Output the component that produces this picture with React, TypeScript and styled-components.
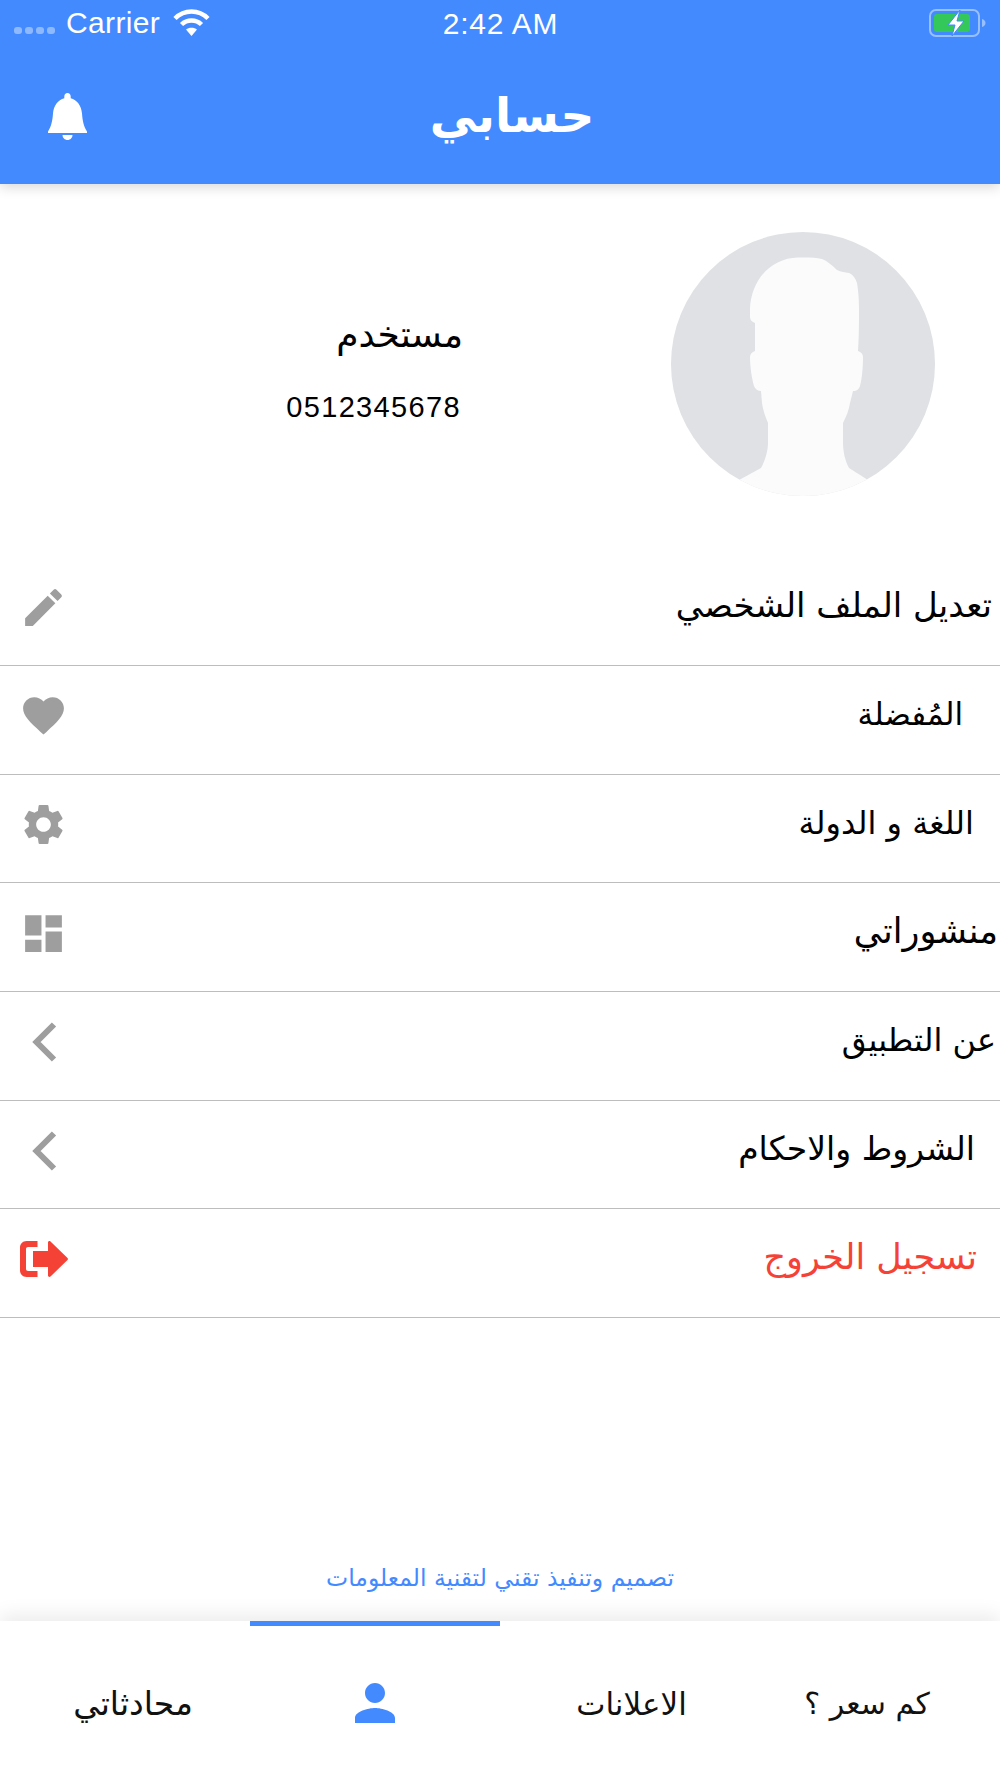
import React from "react";
import styled, { createGlobalStyle } from "styled-components";
import { MdEdit, MdFavorite, MdSettings, MdDashboard, MdPerson } from "react-icons/md";

const Global = createGlobalStyle`
  html, body { margin: 0; padding: 0; background: #fff; }
  body { font-family: "DejaVu Sans", "Liberation Sans", sans-serif; }
`;

const Page = styled.div`
  width: 1000px;
  height: 1778px;
  display: flex;
  flex-direction: column;
  background: #fff;
  overflow: hidden;
`;

const Header = styled.header`
  height: 184px;
  background: #448aff;
  box-shadow: 0 3px 12px rgba(0, 0, 0, 0.16);
  color: #fff;
  display: flex;
  flex-direction: column;
  flex: none;
`;

const StatusBar = styled.div`
  height: 46px;
  padding: 0 13px 0 14px;
  display: grid;
  grid-template-columns: 1fr auto 1fr;
  align-items: center;
  font-family: "Liberation Sans", sans-serif;
  font-size: 30px;
`;

const StatusLeft = styled.div`
  display: flex;
  align-items: center;
`;

const SignalDots = styled.div`
  display: flex;
  gap: 3px;
  margin: 14px 11px 0 0;
`;

const Dot = styled.span`
  width: 8px;
  height: 7px;
  border-radius: 3px;
  background: rgba(255, 255, 255, 0.4);
`;

const Carrier = styled.span`
  letter-spacing: 0.35px;
  margin-right: 13px;
`;

const Clock = styled.span`
  letter-spacing: 0.8px;
  padding-top: 2px;
`;

const StatusRight = styled.div`
  display: flex;
  justify-content: flex-end;
`;

const TitleBar = styled.div`
  flex: 1;
  display: grid;
  grid-template-columns: 135px 1fr 111px;
  align-items: center;
  padding-top: 2px;
`;

const BellWrap = styled.div`
  display: flex;
  justify-content: center;
`;

const Title = styled.h1`
  margin: 0;
  text-align: center;
  font-size: 47px;
  font-weight: 700;
  line-height: 60px;
`;

const Profile = styled.section`
  flex: none;
  margin-top: 48px;
  height: 325.5px;
  display: flex;
  align-items: flex-start;
`;

const Info = styled.div`
  width: 463px;
  height: 264px;
  display: flex;
  flex-direction: column;
  align-items: flex-end;
  justify-content: center;
  flex: none;
`;

const Name = styled.div`
  font-size: 36px;
  line-height: 60px;
  color: #000;
  margin-bottom: 25px;
`;

const Phone = styled.div`
  font-family: "Liberation Sans", sans-serif;
  font-size: 29px;
  letter-spacing: 1.35px;
  line-height: 34px;
  color: #000;
  padding-right: 2px;
`;

const AvatarWrap = styled.div`
  margin-left: 208px;
  width: 264px;
  height: 264px;
  flex: none;
`;

const Menu = styled.nav`
  flex: none;
  display: flex;
  flex-direction: column;
`;

const Row = styled.div`
  height: 108.67px;
  box-sizing: border-box;
  border-bottom: 1px solid #bdbdbd;
  padding-bottom: 8px;
  display: flex;
  align-items: center;
  justify-content: space-between;
`;

const IconSlot = styled.div<{ $color?: string }>`
  width: 87px;
  display: flex;
  justify-content: center;
  align-items: center;
  color: ${(p) => p.$color || "#9e9e9e"};
  flex: none;
`;

const RowLabel = styled.div<{ $inset: number; $size: number; $color?: string }>`
  padding-right: ${(p) => p.$inset}px;
  padding-bottom: 4px;
  font-size: ${(p) => p.$size}px;
  line-height: 50px;
  color: ${(p) => p.$color || "#000"};
`;

const Credit = styled.div`
  margin-top: auto;
  text-align: center;
  font-size: 23.5px;
  line-height: 34px;
  color: #448aff;
  padding-bottom: 26px;
`;

const TabBar = styled.div`
  flex: none;
  height: 157px;
  display: grid;
  grid-template-columns: repeat(4, 1fr);
  background: #fff;
  box-shadow: 0 -6px 18px rgba(0, 0, 0, 0.08);
`;

const Tab = styled.div<{ $active?: boolean }>`
  border-top: 5px solid ${(p) => (p.$active ? "#448aff" : "transparent")};
  display: flex;
  align-items: center;
  justify-content: center;
  color: #448aff;
`;

const TabLabel = styled.span<{ $size: number; $shift: number }>`
  font-size: ${(p) => p.$size}px;
  margin-left: ${(p) => p.$shift}px;
  color: #111;
  padding-top: 3px;
`;

const TabIcon = styled.span`
  display: flex;
  margin-top: 2px;
`;

const Bell = () => (
  <svg width="39" height="47" viewBox="0 0 39 47" fill="#fff">
    <path d="M19.5 0c-1.900 0-3.200 1.500-3.200 3.400v1.800C10 7 5.600 12.600 5 20.500 4.400 28 3.400 33.200 0 38.500V40h39v-1.500c-3.400-5.300-4.400-10.500-5-18C33.400 12.600 29 7 22.700 5.200V3.400C22.700 1.500 21.400 0 19.500 0z" />
    <path d="M14.500 42h10c0 2.800-2.200 5-5 5s-5-2.200-5-5z" />
  </svg>
);

const Wifi = () => (
  <svg width="37" height="28" viewBox="0 0 37 28" fill="none" stroke="#fff" strokeWidth="4.500">
    <path d="M2 9.500C6.500 5 12 2.500 18.500 2.500S30.500 5 35 9.500" />
    <path d="M8.500 15.500c2.700-2.600 6-4 10-4s7.300 1.400 10 4" />
    <path d="M18.500 27l-5.500-6.500c1.500-1.200 3.300-1.800 5.500-1.800s4 .6 5.500 1.800z" fill="#fff" stroke="none" />
  </svg>
);

const Battery = () => (
  <svg width="58" height="28" viewBox="0 0 58 28">
    <rect x="1" y="1" width="49" height="26" rx="6" fill="none" stroke="rgba(255,255,255,0.45)" strokeWidth="2" />
    <path d="M53 10c2 .5 3.500 2 3.500 4s-1.500 3.500-3.500 4z" fill="rgba(255,255,255,0.45)" />
    <rect x="5" y="5" width="36" height="18" rx="3" fill="#34c759" />
    <path d="M31 1L19 16h7l-3 11 12-15h-7z" fill="#fff" stroke="#448aff" strokeWidth="1" />
  </svg>
);

const Avatar = () => (
  <svg width="264" height="264" viewBox="0 0 264 264">
    <defs>
      <clipPath id="avatar-clip">
        <circle cx="132" cy="132" r="132" />
      </clipPath>
    </defs>
    <g clipPath="url(#avatar-clip)">
      <rect width="264" height="264" fill="#dfe1e4" />
      <path
        fill="#fbfbfb"
        d="M127 25.500C100 26 80 48 79 77v8c0 3 2 5 5 6v28c-3 1-5 3-5 6 0 10 2 22 4 29 1 3 4 5 7 5l1 12c1 8 4 15 6 20v20c0 8-3 18-7 25l-21 11.500L40 264h190l-33-16-19-12c-4-7-6-17-6-25v-20c3-6 6-13 7-20l3-12c4 0 6-2 7-5 2-8 3-19 3-29 0-3-2-5-5-6 1-14 1-30 1-42 0-12-1-20-2-26-2-6-5-9-8-10-4-1-8-1-12-3-5-5-10-9-15-11-5-1.500-11-1.500-17-1.500z"
      />
    </g>
  </svg>
);

const Chevron = () => (
  <svg width="26" height="42" viewBox="0 0 26 42" fill="none" stroke="#9e9e9e" strokeWidth="6">
    <path d="M23 3.500L5.500 21 23 38.500" />
  </svg>
);

const Logout = () => (
  <svg width="48" height="36" viewBox="0 0 48 36" fill="#f44336">
    <path d="M17.500 0H6.500C2.900 0 0 2.900 0 6.500v23C0 33.100 2.900 36 6.500 36h11v-6H8c-1.100 0-2-.9-2-2V8c0-1.100.9-2 2-2h9.500z" />
    <path d="M13 10h15V1.500C28 .3 29.500-.4 30.500.5L47.500 17c.6.600.6 1.400 0 2L30.500 35.500c-1 .9-2.500.2-2.500-1V26H13z" />
  </svg>
);

const rows = [
  { label: "تعديل الملف الشخصي", inset: 8, size: 34, icon: <MdEdit size={49} /> },
  { label: "المُفضلة", inset: 37, size: 31, icon: <MdFavorite size={49} /> },
  { label: "اللغة و الدولة", inset: 26, size: 32, icon: <MdSettings size={49} /> },
  { label: "منشوراتي", inset: 2, size: 35, icon: <MdDashboard size={49} /> },
  { label: "عن التطبيق", inset: 4, size: 32, icon: <Chevron /> },
  { label: "الشروط والاحكام", inset: 25, size: 33, icon: <Chevron /> },
  { label: "تسجيل الخروج", inset: 23, size: 35, icon: <Logout />, color: "#f44336" },
];

export default function App() {
  return (
    <Page>
      <Global />
      <Header>
        <StatusBar>
          <StatusLeft>
            <SignalDots>
              <Dot />
              <Dot />
              <Dot />
              <Dot />
            </SignalDots>
            <Carrier>Carrier</Carrier>
            <Wifi />
          </StatusLeft>
          <Clock>2:42 AM</Clock>
          <StatusRight>
            <Battery />
          </StatusRight>
        </StatusBar>
        <TitleBar>
          <BellWrap>
            <Bell />
          </BellWrap>
          <Title dir="rtl">حسابي</Title>
          <span />
        </TitleBar>
      </Header>
      <Profile>
        <Info>
          <Name dir="rtl">مستخدم</Name>
          <Phone>0512345678</Phone>
        </Info>
        <AvatarWrap>
          <Avatar />
        </AvatarWrap>
      </Profile>
      <Menu>
        {rows.map((r) => (
          <Row key={r.label}>
            <IconSlot>{r.icon}</IconSlot>
            <RowLabel dir="rtl" $inset={r.inset} $size={r.size} $color={r.color}>
              {r.label}
            </RowLabel>
          </Row>
        ))}
      </Menu>
      <Credit dir="rtl">تصميم وتنفيذ تقني لتقنية المعلومات</Credit>
      <TabBar>
        <Tab>
          <TabLabel dir="rtl" $size={33} $shift={16}>محادثاتي</TabLabel>
        </Tab>
        <Tab $active>
          <TabIcon>
            <MdPerson size={60} />
          </TabIcon>
        </Tab>
        <Tab>
          <TabLabel dir="rtl" $size={31} $shift={13}>الاعلانات</TabLabel>
        </Tab>
        <Tab>
          <TabLabel dir="rtl" $size={30} $shift={-16}>كم سعر ؟</TabLabel>
        </Tab>
      </TabBar>
    </Page>
  );
}
